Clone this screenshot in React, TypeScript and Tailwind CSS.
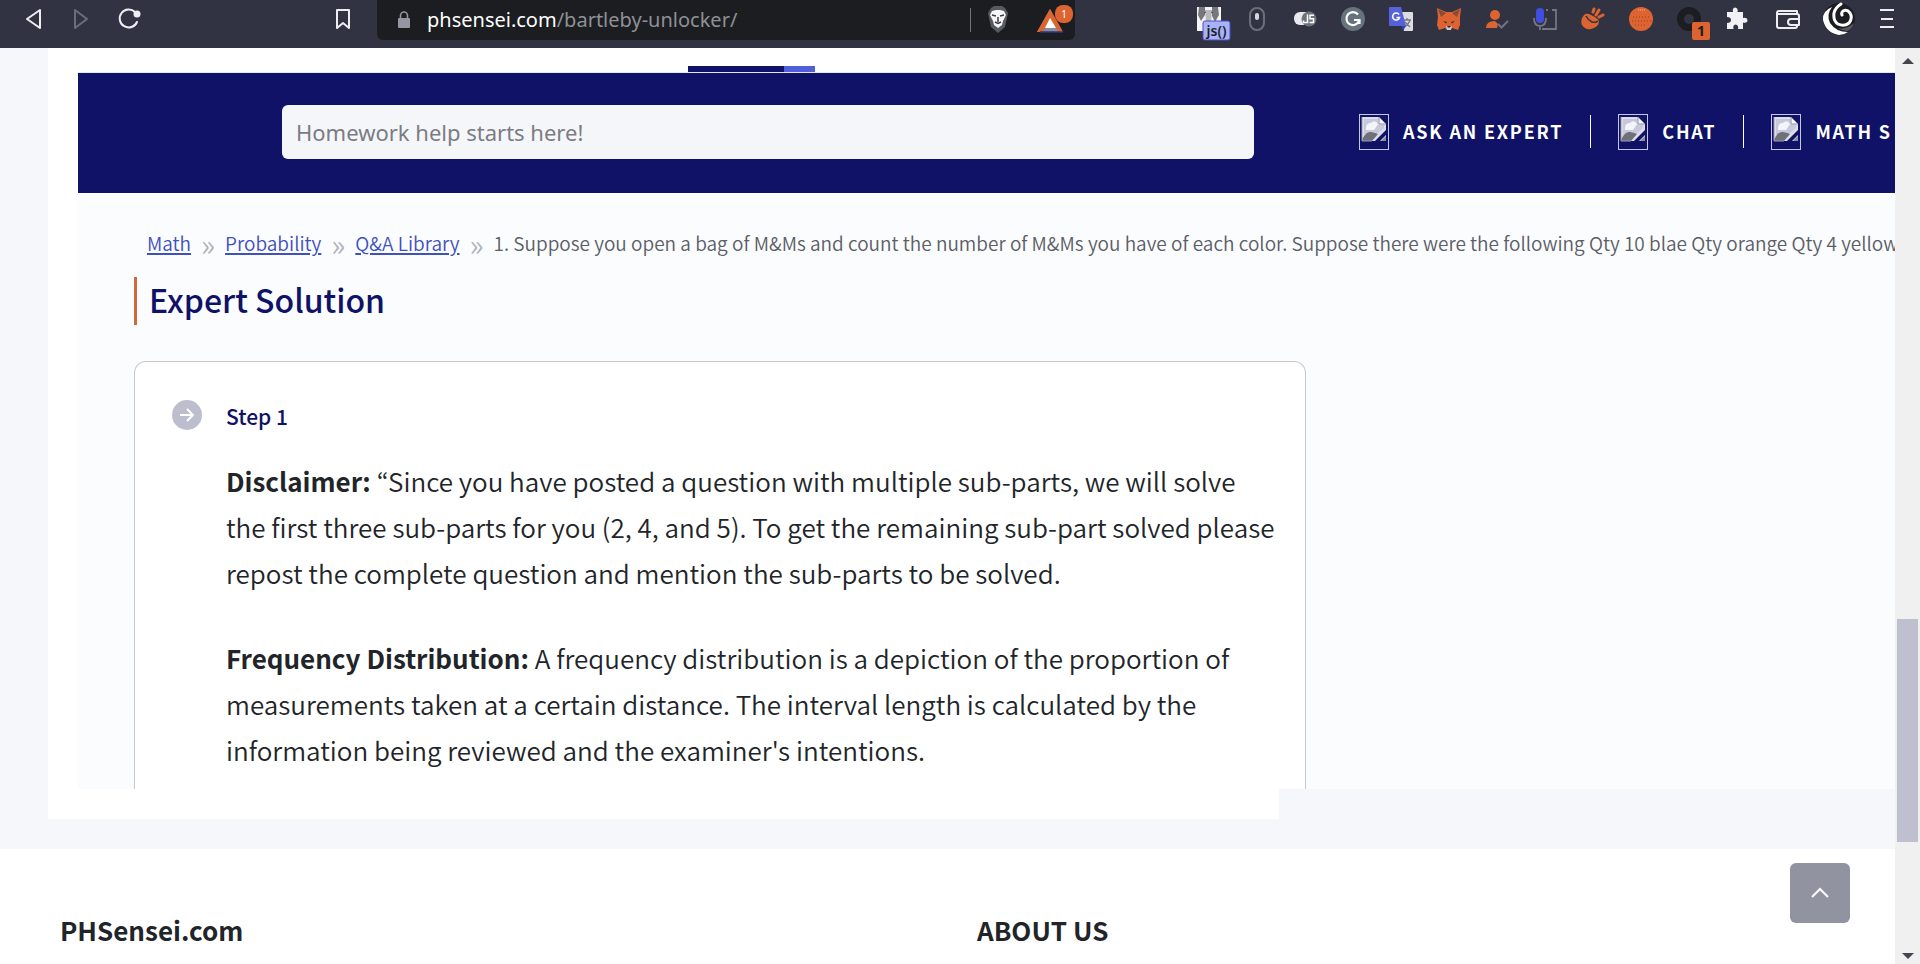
import type { ReactNode } from 'react'

const body = "font-['Noto_Sans_CJK_KR','Noto_Sans',sans-serif]"
const ui = "font-['Noto_Sans','Open_Sans',sans-serif]"

const crumbs = ['Math', 'Probability', 'Q&A Library']

const navItems = ['ASK AN EXPERT', 'CHAT', 'MATH S']

interface Extension {
    name: string
    icon: ReactNode
}

const extensions: Extension[] = [
    {
        name: 'Script runner',
        icon: (
            <>
                <rect width="24" height="24" fill="#f4f4f6" />
                <path d="M2 0h6v8l-4 6-3-6zM15 0h6l1 8-4 7-3-6z" fill="#77777d" />
                <path d="M8 3h7l-1 12H9z" fill="#b9b9be" />
                <path d="M7 6l2-1M16 6l-2-1" stroke="#5b3f40" />
                <rect x="6" y="14" width="27" height="19" rx="2" fill="#a9b2f5" stroke="#4451c8" strokeWidth="1" />
                <text x="19.5" y="29" textAnchor="middle" fontSize="14" fontWeight="600" fill="#1c1d30" className={ui}>js()</text>
            </>
        ),
    },
    {
        name: 'Mouse',
        icon: (
            <>
                <rect x="5" y="1" width="14" height="22" rx="7" fill="none" stroke="#6d6e7b" strokeWidth="2" />
                <rect x="10" y="6" width="4" height="7" rx="2" fill="#d5d6dc" />
            </>
        ),
    },
    {
        name: 'JavaScript switch',
        icon: (
            <>
                <rect x="1" y="5" width="18" height="13" rx="6" fill="#e9eaee" />
                <circle cx="16" cy="12" r="7.5" fill="#6a747d" />
                <path d="M14.500 7.500v8h-4v-2M21 8.300h-4v3.500h3.500v3.700h-4" fill="none" stroke="#fff" strokeWidth="1.500" />
            </>
        ),
    },
    {
        name: 'Grammar',
        icon: (
            <>
                <circle cx="12" cy="12" r="12" fill="#66737d" />
                <path d="M17 7.500A6.500 6.500 0 1 0 18 14M13 13h5.500v4" fill="none" stroke="#fff" strokeWidth="2.200" />
            </>
        ),
    },
    {
        name: 'Translate',
        icon: (
            <>
                <path d="M9 5h14q1 0 1 1v17q0 1-1 1h-8z" fill="#dcdde3" />
                <path d="M14 13h8M18 11v2M21 13q-1 4-6 7M16 15l5 5" fill="none" stroke="#777883" strokeWidth="1.300" />
                <path d="M1 0h11l5 19H1q-1 0-1-1V1q0-1 1-1z" fill="#5562dc" />
                <path d="M13 19h4l-3 5z" fill="#3541b8" />
                <path d="M10 7.500a3.500 3.500 0 1 0 .5 3H7.500" fill="none" stroke="#fff" strokeWidth="1.600" />
            </>
        ),
    },
    {
        name: 'Wallet fox',
        icon: (
            <>
                <path d="M0 1l9 4h6l9-4-1 9 0 8-2 5-6-2-2 2h-3l-2-2-6 2-2-5 1-8z" fill="#dd6430" />
                <path d="M1 2l8 4-5 4zM23 2l-8 4 5 4z" fill="#8a4b35" />
                <path d="M6 14l4 1-1 1.500zM18 14l-4 1 1 1.500z" fill="#2c2b38" />
                <path d="M9 19h6l-1 4h-4z" fill="#c9c9cf" />
                <path d="M10 19h4l-1 1.500h-2z" fill="#23232e" />
            </>
        ),
    },
    {
        name: 'User check',
        icon: (
            <>
                <circle cx="10" cy="8" r="5" fill="#dd6430" />
                <path d="M1 21q0-7 9-7l3 3-1 4z" fill="#dd6430" />
                <path d="M13 17l3.500 3.500L23 14" fill="none" stroke="#71727d" strokeWidth="2" />
            </>
        ),
    },
    {
        name: 'Dictation',
        icon: (
            <>
                <rect x="3" y="1" width="8" height="15" rx="4" fill="#3f4ee0" />
                <path d="M1 11q0 8 6 8t6-8M7 19v4M13 3h2M19 3h4v19H9" fill="none" stroke="#757682" strokeWidth="1.800" />
            </>
        ),
    },
    {
        name: 'Carrot',
        icon: (
            <>
                <path d="M3 8Q-1 13 1 18q3 5 9 4 8-2 8-8-1-2-4-4L8 7Q5 6 3 8z" fill="#dd6430" />
                <path d="M5 9q2 4 6 6 4 1 6-1" fill="none" stroke="#323342" strokeWidth="1.500" />
                <path d="M13 2l-1 3M18 3l-3 5M22 8l-4 2" stroke="#dd6430" strokeWidth="3" strokeLinecap="round" />
            </>
        ),
    },
    {
        name: 'Orange',
        icon: (
            <>
                <circle cx="12" cy="12" r="12" fill="#dd6430" />
                <path d="M4 10h17M3 14h19M6 18h12" stroke="#8f432a" strokeDasharray="1 2" />
                <path d="M9 3h7" stroke="#f0b79c" strokeDasharray="1 1" />
            </>
        ),
    },
    {
        name: 'Ring',
        icon: (
            <>
                <circle cx="12" cy="12" r="8.500" fill="none" stroke="#1b1d20" strokeWidth="7" />
                <rect x="15" y="15" width="18" height="18" rx="2" fill="#dd6430" />
                <text x="24" y="29" textAnchor="middle" fontSize="14" fontWeight="700" fill="#1b1d20" className={ui}>1</text>
            </>
        ),
    },
    {
        name: 'Extensions',
        icon: (
            <path d="M4 5h4q-1-4 2-4.500Q13.500 1 12.500 5H18v6q4-1 4.500 2 0 3.500-4.500 2.500V22h-5q1-4-2.500-4.500Q7.500 18 8.500 22H2v-6q4 0 4-3T2 10V5z" fill="#f1f1f4" />
        ),
    },
]

function BrokenImage() {
    return (
        <svg className="h-9 w-[30px] shrink-0" viewBox="0 0 30 36" aria-hidden="true">
            <rect x="0.5" y="0.5" width="29" height="35" fill="none" stroke="#c3c5ea" />
            <path d="M3 3h17l7 7v17H3z" fill="#dcdde6" />
            <path d="M5 5h14v6h6v3L12 25H5z" fill="#c6c9dc" />
            <path d="M7 14q0-5 5-5 4-4 7 1l-4 6H7z" fill="#f4f5f8" />
            <path d="M3 26q4-9 9-8t7 2l-6 7H3z" fill="#6f7078" />
            <path d="M20 3l7 7h-7z" fill="#f7f7fa" stroke="#8d8fa5" />
            <path d="M28 15v5l-8 8h-5z" fill="#0f1267" />
            <path d="M27 22v5h-5z" fill="#8b8c96" />
            <path d="M3 3v24M3 27h10" stroke="#9b9dad" />
        </svg>
    )
}

function BrowserBar() {
    return (
        <header className="flex h-12 shrink-0 items-start bg-[#323342] pr-[26px] text-[#eeeef2]">
            <div className="flex h-10 shrink-0 items-center pl-[22px]">
                <button aria-label="Back" className="mr-6 h-6 w-6">
                    <svg viewBox="0 0 24 24" fill="none" stroke="currentColor" strokeWidth="2" strokeLinejoin="round"><path d="M18 2v18L5 11z" /></svg>
                </button>
                <button aria-label="Forward" className="mr-6 h-6 w-6 text-[#6c6d7a]">
                    <svg viewBox="0 0 24 24" fill="none" stroke="currentColor" strokeWidth="2" strokeLinejoin="round"><path d="M5 2v18l12-9z" /></svg>
                </button>
                <button aria-label="Reload" className="h-6 w-6">
                    <svg viewBox="0 0 24 24" fill="none" stroke="currentColor" strokeWidth="2" strokeLinecap="round"><path d="M17 4A9 9 0 1 0 19 14" /><circle cx="19" cy="6" r="3.500" fill="currentColor" stroke="none" /></svg>
                </button>
            </div>
            <button aria-label="Bookmark" className="mt-2 ml-[189px] h-6 w-6 shrink-0">
                <svg viewBox="0 0 24 24" fill="none" stroke="currentColor" strokeWidth="2" strokeLinejoin="round"><path d="M6 2h12v18l-6-5-6 5z" /></svg>
            </button>
            <div className="ml-[22px] flex h-10 w-[698px] shrink-0 items-center rounded-b-md bg-[#1b1d20]">
                <svg className="ml-5 h-[18px] w-[14px]" viewBox="0 0 14 18">
                    <path d="M3.500 8V4.500a3.500 3.500 0 0 1 7 0V8" fill="none" stroke="#9496a2" strokeWidth="1.600" />
                    <rect x="1" y="7" width="12" height="10" rx="1" fill="#9496a2" />
                </svg>
                <div className={`ml-4 flex-1 text-[20px] leading-10 text-[#8f9096] ${ui}`}>
                    <span className="text-white">phsensei.com</span>/bartleby-unlocker/
                </div>
                <span className="h-6 w-px bg-[#73747c]" />
                <svg className="ml-4 h-7 w-[22px]" viewBox="0 0 22 28">
                    <path d="M4 2l3-2h8l3 2 3 5-3 14-7 6-7-6L1 7z" fill="#585a62" />
                    <path d="M5 5l4-1h4l4 1 2 4-3 6-1 4-4 3-4-3-1-4-3-6z" fill="#f5f5f7" />
                    <path d="M5 9l4 1M17 9l-4 1M11 11v5M8 16l3 1.500 3-1.500" fill="none" stroke="#3c3d45" strokeWidth="1.500" />
                </svg>
                <svg className="mr-[2px] ml-7 h-8 w-[36px]" viewBox="0 0 36 32">
                    <path d="M0 28L13 5l13 23z" fill="#8a8c9b" />
                    <path d="M13 5L0 28h6l7-13 9 13h4z" fill="#dd6430" />
                    <path d="M13 14l6 10H8z" fill="#fff" />
                    <path d="M3 28h23" stroke="#2e3480" strokeWidth="1.500" />
                    <rect x="18" y="1" width="18" height="18" rx="8" fill="#dd6430" />
                    <text x="27" y="14" textAnchor="middle" fontSize="10" fill="#fff" className={ui}>1</text>
                </svg>
            </div>
            <div className="ml-auto flex shrink-0 items-start gap-6 pt-[7px]">
                {extensions.map((ext) => (
                    <button key={ext.name} aria-label={ext.name} className="h-6 w-6">
                        <svg className="h-6 w-6 overflow-visible" viewBox="0 0 24 24">{ext.icon}</svg>
                    </button>
                ))}
                <button aria-label="Wallet" className="ml-[3px] h-6 w-6">
                    <svg viewBox="0 0 24 24" fill="none" stroke="currentColor" strokeWidth="2" strokeLinejoin="round">
                        <path d="M21 8V4H3Q1 4 1 6v13q0 2 2 2h16q2 0 2-2v-1M1 7h20q2 0 2 2v9h-8q-3 0-3-3t3-3h8" />
                    </svg>
                </button>
            </div>
            <button aria-label="Profile" className="mt-[2px] ml-[22px] h-[34px] w-[34px] shrink-0">
                <svg viewBox="0 0 34 34">
                    <circle cx="17" cy="17" r="16" fill="#1b1d20" />
                    <path d="M10 5Q0 9 1 18q3 13 16 15 5 0 9-3-12 0-18-9Q4 13 10 5z" fill="#fff" />
                    <path d="M19 2q-6 4-7 9-1 8 4 11 6 3 11-1 4-5 1-10-3-4-7-2-2 2-1 4" fill="none" stroke="#fff" strokeWidth="3" strokeLinecap="round" />
                    <path d="M16 26q8 2 16-5-1 5-6 8-6 0-10-3z" fill="#55575e" />
                </svg>
            </button>
            <button aria-label="Menu" className="mt-[7px] ml-6 h-6 w-[14px] shrink-0">
                <svg viewBox="0 0 14 24" stroke="currentColor" strokeWidth="2"><path d="M0 3h14M1 12h12M0 20h14" /></svg>
            </button>
        </header>
    )
}

function Scrollbar() {
    return (
        <div className="flex w-[25px] shrink-0 flex-col items-center bg-[#f0f0f0] pt-[9px] pb-1" aria-hidden="true">
            <svg className="h-2 w-3" viewBox="0 0 12 8"><path d="M0 7l6-6 6 6z" fill="#45464d" /></svg>
            <div className="grow-[554]" />
            <div className="w-[21px] grow-[223] bg-[#bfc0cf]" />
            <div className="grow-[110]" />
            <svg className="h-2 w-3" viewBox="0 0 12 8"><path d="M0 1l6 6 6-6z" fill="#45464d" /></svg>
        </div>
    )
}

export default function App() {
    return (
        <div className={`flex h-screen flex-col overflow-hidden bg-white text-[#212529] ${body}`}>
            <BrowserBar />
            <div className="flex min-h-0 flex-1">
                <main className="relative min-w-0 flex-1 overflow-hidden">
                    <div className="bg-[#f6f7fa] pb-[30px] pl-12">
                        {/* Tab underline above the header */}
                        <div className="flex items-end bg-white pt-[18px] pl-[640px]">
                            <span className="h-[6px] w-24 bg-[#0f1267]" />
                            <span className="h-[6px] w-[31px] bg-[#515fdb]" />
                        </div>

                        <div className="bg-white pl-[30px]">
                            {/* Search and nav */}
                            <div className="flex h-[121px] items-center overflow-hidden border-t border-[#e6e7f5] bg-[#0f1267] pb-[3px] pl-[204px]">
                                <input
                                    type="text"
                                    aria-label="Search"
                                    placeholder="Homework help starts here!"
                                    className={`h-[54px] w-[972px] shrink-0 rounded-md bg-[#f5f6f9] px-[14px] text-[22px] placeholder-[#7a7c84] outline-none ${ui}`}
                                />
                                <nav className="ml-[105px] flex shrink-0 items-center">
                                    {navItems.map((item, index) => (
                                        <a key={item} href="#" className="flex items-center whitespace-nowrap text-white">
                                            {index > 0 && <span className="mx-[27px] h-[33px] w-px bg-white" />}
                                            <BrokenImage />
                                            <span className="ml-[14px] pb-0.5 text-[18px] leading-6 font-bold tracking-widest">{item}</span>
                                        </a>
                                    ))}
                                </nav>
                            </div>

                            <div className="overflow-hidden bg-[#fafcfe] pl-14">
                                {/* Breadcrumb */}
                                <nav className="mt-[34px] flex pl-[13px] text-[19px] leading-8 font-[350] whitespace-nowrap text-[#5c5e66]">
                                    {crumbs.map((crumb) => (
                                        <span key={crumb} className="flex">
                                            <a href="#" className="text-[#4050bc] underline decoration-2 underline-offset-2">{crumb}</a>
                                            <span className="w-[34px] text-center text-[30px] text-[#b0b1b8]">»</span>
                                        </span>
                                    ))}
                                    <span>
                                        1. Suppose you open a bag of M&amp;Ms and count the number of M&amp;Ms you have of each color. Suppose there were the following Qty 10 blae Qty orange Qty 4 yellow
                                    </span>
                                </nav>

                                <h2 className="mt-[18px] border-l-[3px] border-[#cf6a3a] pb-1 pl-3 text-[32px] leading-[44px] font-medium text-[#0f1267]">
                                    Expert Solution
                                </h2>

                                {/* Answer card */}
                                <div className="mt-9 flex max-w-[1172px] rounded-t-xl border border-b-0 border-[#c6c8cc] bg-white pt-[34px] pl-[37px]">
                                    <svg className="mt-1 h-[30px] w-[30px] shrink-0" viewBox="0 0 30 30" aria-hidden="true">
                                        <circle cx="15" cy="15" r="15" fill="#bdbecd" />
                                        <path d="M8 15h13M15 9l6 6-6 6" fill="none" stroke="#fff" strokeWidth="2" />
                                    </svg>
                                    <div className="ml-6 text-[26px] leading-[46px] font-[350] whitespace-nowrap">
                                        <h3 className="text-[21px] leading-10 font-medium text-[#0f1267]">Step 1</h3>
                                        <p className="mt-[22px]">
                                            <strong className="font-bold">Disclaimer:</strong> “Since you have posted a question with multiple sub-parts, we will solve
                                            <br />
                                            the first three sub-parts for you (2, 4, and 5). To get the remaining sub-part solved please
                                            <br />
                                            repost the complete question and mention the sub-parts to be solved.
                                        </p>
                                        <p className="mt-[39px] pb-4">
                                            <strong className="font-bold">Frequency Distribution:</strong> A frequency distribution is a depiction of the proportion of
                                            <br />
                                            measurements taken at a certain distance. The interval length is calculated by the
                                            <br />
                                            information being reviewed and the examiner's intentions.
                                        </p>
                                    </div>
                                </div>
                            </div>
                        </div>
                        <div className="h-[30px] w-2/3 bg-white" />
                    </div>

                    <footer className="grid grid-cols-[917fr_918fr] bg-white pt-[61px] pl-[60px] text-[26px] leading-10 font-bold">
                        <h4>PHSensei.com</h4>
                        <h4>ABOUT US</h4>
                    </footer>

                    <button
                        aria-label="Back to top"
                        className="absolute right-[45px] bottom-[41px] flex h-[60px] w-[60px] items-center justify-center rounded-md bg-[#9193a0]"
                    >
                        <svg className="h-5 w-5" viewBox="0 0 20 20" fill="none" stroke="#fff" strokeWidth="2"><path d="M2 14l8-8 8 8" /></svg>
                    </button>
                </main>
                <Scrollbar />
            </div>
        </div>
    )
}
